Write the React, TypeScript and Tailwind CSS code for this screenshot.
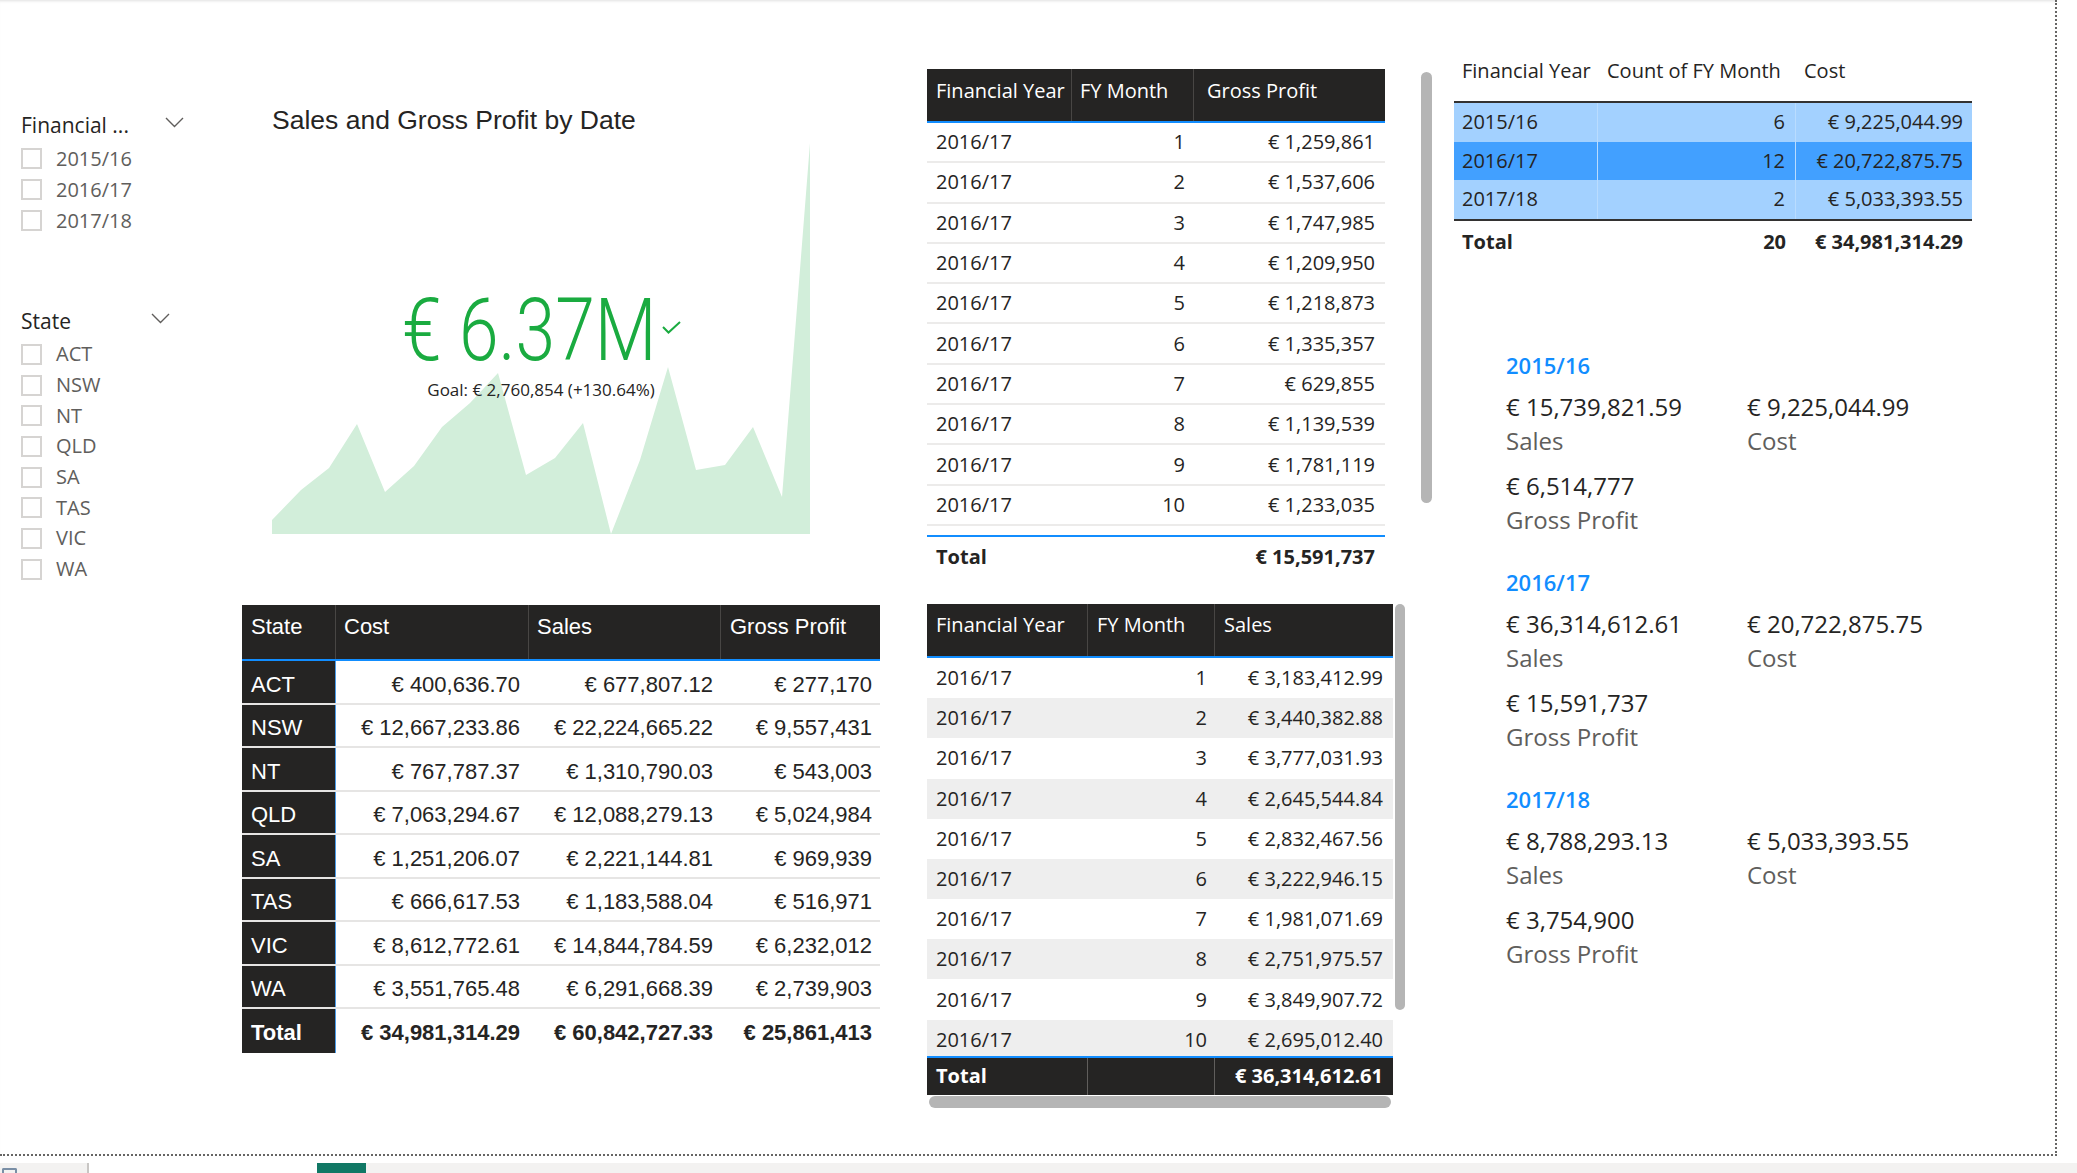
import { type FC } from "react"

const SEG = "font-['Open_Sans','Noto_Sans',sans-serif]"
const DIN = "font-['Liberation_Sans',Arial,sans-serif]"

const Chevron: FC = () => (
  <svg width="19" height="11" viewBox="0 0 19 11" fill="none">
    <polyline points="1,1 9.5,9.5 18,1" stroke="#605e5c" strokeWidth="1.4" />
  </svg>
)

interface SlicerProps {
  title: string
  items: string[]
  headClass: string
  rowClass: string
}

const Slicer: FC<SlicerProps> = ({ title, items, headClass, rowClass }) => (
  <div>
    <div className={`flex items-center justify-between h-[30px] ${headClass}`}>
      <span className="text-[21px] leading-none text-[#252423]">{title}</span>
      <div className="-mt-[5px]">
        <Chevron />
      </div>
    </div>
    <div className="mt-[3px]">
      {items.map((item) => (
        <div key={item} className={`flex items-center gap-[14px] ${rowClass}`}>
          <div className="w-[21px] h-[21px] border-2 border-[#d6d4d2]" />
          <span className="text-[20px] leading-none text-[#605e5c]">{item}</span>
        </div>
      ))}
    </div>
  </div>
)

// area chart points, relative to the chart box (538 x 391)
const areaPts =
  "0,391 0,377 29,347 57,325 85,281 113,349 142,323 170,284 198,260 226,230 254,332 283,315 311,280 339,391 368,317 396,224 424,327 453,322 481,284 510,354 538,0 538,391"

const stateRows = [
  ["ACT", "€ 400,636.70", "€ 677,807.12", "€ 277,170"],
  ["NSW", "€ 12,667,233.86", "€ 22,224,665.22", "€ 9,557,431"],
  ["NT", "€ 767,787.37", "€ 1,310,790.03", "€ 543,003"],
  ["QLD", "€ 7,063,294.67", "€ 12,088,279.13", "€ 5,024,984"],
  ["SA", "€ 1,251,206.07", "€ 2,221,144.81", "€ 969,939"],
  ["TAS", "€ 666,617.53", "€ 1,183,588.04", "€ 516,971"],
  ["VIC", "€ 8,612,772.61", "€ 14,844,784.59", "€ 6,232,012"],
  ["WA", "€ 3,551,765.48", "€ 6,291,668.39", "€ 2,739,903"],
]

const gpRows = [
  "€ 1,259,861",
  "€ 1,537,606",
  "€ 1,747,985",
  "€ 1,209,950",
  "€ 1,218,873",
  "€ 1,335,357",
  "€ 629,855",
  "€ 1,139,539",
  "€ 1,781,119",
  "€ 1,233,035",
]

const salesRows = [
  "€ 3,183,412.99",
  "€ 3,440,382.88",
  "€ 3,777,031.93",
  "€ 2,645,544.84",
  "€ 2,832,467.56",
  "€ 3,222,946.15",
  "€ 1,981,071.69",
  "€ 2,751,975.57",
  "€ 3,849,907.72",
  "€ 2,695,012.40",
]

const yearRows = [
  { year: "2015/16", count: "6", cost: "€ 9,225,044.99", selected: false },
  { year: "2016/17", count: "12", cost: "€ 20,722,875.75", selected: true },
  { year: "2017/18", count: "2", cost: "€ 5,033,393.55", selected: false },
]

const cards = [
  { year: "2015/16", sales: "€ 15,739,821.59", cost: "€ 9,225,044.99", gp: "€ 6,514,777" },
  { year: "2016/17", sales: "€ 36,314,612.61", cost: "€ 20,722,875.75", gp: "€ 15,591,737" },
  { year: "2017/18", sales: "€ 8,788,293.13", cost: "€ 5,033,393.55", gp: "€ 3,754,900" },
]

const StateTable: FC = () => (
  <div className={`${DIN} w-[638px] mt-[71px] text-[22px]`}>
    <div className="flex h-[56px] bg-[#252423] border-b-2 border-[#118dff] text-white leading-[28px]">
      <div className="w-[94px] pl-[9px] pt-[8px] border-r border-[#484644]">State</div>
      <div className="w-[193px] pl-[8px] pt-[8px] border-r border-[#484644]">Cost</div>
      <div className="w-[192px] pl-[8px] pt-[8px] border-r border-[#484644]">Sales</div>
      <div className="flex-1 pl-[9px] pt-[8px]">Gross Profit</div>
    </div>
    {stateRows.map((r) => (
      <div key={r[0]} className="flex h-[43.5px] border-b-2 border-[#e6e5e4] text-[#252423]">
        <div className="w-[94px] flex items-center pl-[9px] pt-[5px] bg-[#252423] text-white border-r border-[#4a9be8]">
          {r[0]}
        </div>
        <div className="w-[193px] flex items-center justify-end pr-[9px] pt-[5px]">{r[1]}</div>
        <div className="w-[192px] flex items-center justify-end pr-[8px] pt-[5px]">{r[2]}</div>
        <div className="flex-1 flex items-center justify-end pr-[8px] pt-[5px]">{r[3]}</div>
      </div>
    ))}
    <div className="flex h-[43.5px] font-bold text-[#252423]">
      <div className="w-[94px] flex items-center pl-[9px] pt-[3px] bg-[#252423] text-white border-r border-[#4a9be8]">
        Total
      </div>
      <div className="w-[193px] flex items-center justify-end pr-[9px] pt-[3px]">€ 34,981,314.29</div>
      <div className="w-[192px] flex items-center justify-end pr-[8px] pt-[3px]">€ 60,842,727.33</div>
      <div className="flex-1 flex items-center justify-end pr-[8px] pt-[3px]">€ 25,861,413</div>
    </div>
  </div>
)

const GrossProfitTable: FC = () => (
  <div className="flex">
    <div className="w-[458px] text-[20px]">
      <div className="flex h-[54px] bg-[#252423] border-b-2 border-[#118dff] text-white leading-[28px]">
        <div className="w-[145px] pl-[9px] pt-[8px] border-r border-[#484644]">Financial Year</div>
        <div className="w-[122px] pl-[8px] pt-[8px] border-r border-[#484644]">FY Month</div>
        <div className="flex-1 pl-[13px] pt-[8px]">Gross Profit</div>
      </div>
      {gpRows.map((v, i) => (
        <div key={i} className="flex h-[40.3px] border-b-2 border-[#ecebea] text-[#252423]">
          <div className="w-[145px] flex items-center pl-[9px]">2016/17</div>
          <div className="w-[122px] flex items-center justify-end pr-[9px]">{i + 1}</div>
          <div className="flex-1 flex items-center justify-end pr-[10px]">{v}</div>
        </div>
      ))}
      <div className="h-[9px]" />
      <div className="flex h-[43px] border-t-2 border-[#118dff] font-bold text-[#252423]">
        <div className="w-[145px] flex items-center pl-[9px]">Total</div>
        <div className="w-[122px]" />
        <div className="flex-1 flex items-center justify-end pr-[10px]">€ 15,591,737</div>
      </div>
    </div>
    <div className="ml-[36px] mt-[3px] w-[11px] h-[431px] rounded-full bg-[#b5b5b5]" />
  </div>
)

const SalesTable: FC = () => (
  <div className="mt-[26px]">
    <div className="flex">
      <div className="w-[466px] text-[20px]">
        <div className="flex h-[54px] bg-[#252423] border-b-2 border-[#118dff] text-white leading-[28px]">
          <div className="w-[161px] pl-[9px] pt-[7px] border-r border-[#484644]">Financial Year</div>
          <div className="w-[127px] pl-[9px] pt-[7px] border-r border-[#484644]">FY Month</div>
          <div className="flex-1 pl-[9px] pt-[7px]">Sales</div>
        </div>
        <div className="h-[398px] overflow-hidden">
          {salesRows.map((v, i) => (
            <div
              key={i}
              className={`flex h-[40.2px] text-[#252423] ${i % 2 === 1 ? "bg-[#eeeeee]" : "bg-white"}`}
            >
              <div className="w-[161px] flex items-center pl-[9px]">2016/17</div>
              <div className="w-[127px] flex items-center justify-end pr-[8px]">{i + 1}</div>
              <div className="flex-1 flex items-center justify-end pr-[10px]">{v}</div>
            </div>
          ))}
        </div>
        <div className="flex h-[39px] bg-[#252423] border-t-2 border-[#118dff] text-white font-bold">
          <div className="w-[161px] flex items-center pl-[9px] border-r border-[#605e5c]">Total</div>
          <div className="w-[127px] border-r border-[#605e5c]" />
          <div className="flex-1 flex items-center justify-end pr-[10px]">€ 36,314,612.61</div>
        </div>
      </div>
      <div className="ml-[2px] w-[10px] h-[406px] rounded-full bg-[#b5b5b5]" />
    </div>
    <div className="ml-[2px] mt-[1px] w-[462px] h-[12px] rounded-full bg-[#b5b5b5]" />
  </div>
)

const YearTable: FC = () => (
  <div className="w-[518px] text-[20px] text-[#252423]">
    <div className="flex h-[44px] leading-[28px]">
      <div className="w-[144px] pl-[8px]">Financial Year</div>
      <div className="w-[198px] pl-[9px]">Count of FY Month</div>
      <div className="flex-1 pl-[8px]">Cost</div>
    </div>
    <div className="border-t-2 border-b-2 border-[#333231]">
      {yearRows.map((r) => (
        <div
          key={r.year}
          className={`flex h-[38.5px] ${r.selected ? "bg-[#42a0ff]" : "bg-[#a3d1ff]"}`}
        >
          <div className="w-[144px] flex items-center pl-[8px] border-r border-[#b9dcff]">{r.year}</div>
          <div className="w-[198px] flex items-center justify-end pr-[10px] border-r border-[#b9dcff]">
            {r.count}
          </div>
          <div className="flex-1 flex items-center justify-end pr-[9px]">{r.cost}</div>
        </div>
      ))}
    </div>
    <div className="flex h-[42px] font-bold">
      <div className="w-[144px] flex items-center pl-[8px]">Total</div>
      <div className="w-[198px] flex items-center justify-end pr-[10px]">20</div>
      <div className="flex-1 flex items-center justify-end pr-[9px]">€ 34,981,314.29</div>
    </div>
  </div>
)

const Cards: FC = () => (
  <div className="ml-[33px] mt-[88px] flex flex-col gap-[33px]">
    {cards.map((c) => (
      <div key={c.year} className="flex h-[184px]">
        <div className="w-[3px] bg-[#c8c6c4]" />
        <div className="pl-[19px]">
          <div className="text-[22px] leading-[28px] font-semibold text-[#118dff]">{c.year}</div>
          <div className="grid grid-cols-[241px_260px] mt-[11px] text-[24px] leading-[34px]">
            <div>
              <div className="text-[#252423]">{c.sales}</div>
              <div className="text-[#605e5c]">Sales</div>
            </div>
            <div>
              <div className="text-[#252423]">{c.cost}</div>
              <div className="text-[#605e5c]">Cost</div>
            </div>
          </div>
          <div className="mt-[11px] text-[24px] leading-[34px]">
            <div className="text-[#252423]">{c.gp}</div>
            <div className="text-[#605e5c]">Gross Profit</div>
          </div>
        </div>
      </div>
    ))}
  </div>
)

const App: FC = () => {
  return (
    <div className={`${SEG} w-[2077px] h-[1173px] bg-white overflow-hidden`}>
      <div className="flex w-[2057px] h-[1156px] border-r-2 border-b-2 border-dotted border-[#666564] shadow-[inset_0_3px_3px_-2px_rgba(0,0,0,0.12)]">
        {/* slicers */}
        <div className="w-[242px] shrink-0 pl-[21px] pt-[110px]">
          <Slicer
            title="Financial ..."
            items={["2015/16", "2016/17", "2017/18"]}
            headClass="w-[163px]"
            rowClass="h-[31px]"
          />
          <div className="mt-[70px]">
            <Slicer
              title="State"
              items={["ACT", "NSW", "NT", "QLD", "SA", "TAS", "VIC", "WA"]}
              headClass="w-[149px]"
              rowClass="h-[30.7px]"
            />
          </div>
        </div>

        {/* chart + state table */}
        <div className="w-[638px] shrink-0 pt-[104px]">
          <div className="pl-[30px]">
            <div className={`${DIN} text-[26.5px] leading-[32px] text-[#252423]`}>
              Sales and Gross Profit by Date
            </div>
            <div className="relative mt-[7px] w-[538px] h-[391px]">
              <svg width="538" height="391" viewBox="0 0 538 391">
                <polygon points={areaPts} fill="#d2eeda" />
              </svg>
              <div className="absolute inset-x-0 top-[144px] flex flex-col items-center">
                <div className="flex items-start">
                  <div className="w-[256px] h-[87px]">
                    <span className="inline-block origin-left scale-x-[0.82] whitespace-nowrap font-['Roboto',sans-serif] font-light text-[87px] leading-none text-[#1aab40]">
                      € 6.37M
                    </span>
                  </div>
                  <svg className="ml-[4px] mt-[34px]" width="19" height="13" viewBox="0 0 19 13" fill="none">
                    <polyline points="1,6 6.5,11.5 18,1" stroke="#1aab40" strokeWidth="2" />
                  </svg>
                </div>
                <div className="mt-[5px] text-[17px] leading-[22px] text-[#252423]">
                  Goal: € 2,760,854 (+130.64%)
                </div>
              </div>
            </div>
          </div>
          <StateTable />
        </div>

        {/* month tables */}
        <div className="w-[506px] shrink-0 ml-[47px] pt-[69px]">
          <GrossProfitTable />
          <SalesTable />
        </div>

        {/* year table + cards */}
        <div className="w-[540px] shrink-0 ml-[21px] pt-[57px]">
          <YearTable />
          <Cards />
        </div>
      </div>

      {/* page tabs strip */}
      <div className="flex h-[10px] mt-[7px]">
        <div className="w-[87px] bg-[#f3f2f1] pl-[2px] pt-[5px]">
          <div className="w-[15px] h-[5px] border-2 border-b-0 border-[#7a8fa6] rounded-t-[2px]" />
        </div>
        <div className="w-[2px] bg-[#c8c6c4]" />
        <div className="w-[228px] bg-white" />
        <div className="w-[49px] bg-[#117865]" />
        <div className="flex-1 bg-[#f3f2f1]" />
      </div>
    </div>
  )
}

export default App
